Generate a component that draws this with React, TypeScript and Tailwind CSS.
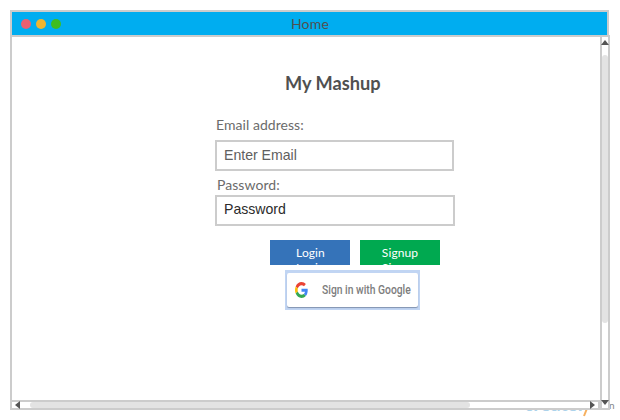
import React from 'react';

function TitleBar() {
  return (
    <header className="grid h-[27px] w-[599px] grid-cols-3 items-center border-2 border-[#cccccc] bg-[#00adf0]">
      <div className="flex gap-[5px] pl-[9px]">
        <span className="size-[10px] rounded-full bg-[#ea6070]" />
        <span className="size-[10px] rounded-full bg-[#efb52f]" />
        <span className="size-[10px] rounded-full bg-[#3fbd20]" />
      </div>
      <h1 className="pl-px pt-px text-center text-[14px] leading-5 tracking-[0.2px] text-[#505050]">Home</h1>
    </header>
  );
}

function GoogleIcon() {
  return (
    <svg className="h-4 w-[13px] shrink-0" viewBox="0 0 48 48" preserveAspectRatio="none">
      <path fill="#EA4335" d="M24 9.5c3.54 0 6.71 1.22 9.21 3.6l6.85-6.85C35.9 2.38 30.47 0 24 0 14.62 0 6.51 5.38 2.56 13.22l7.98 6.19C12.43 13.72 17.74 9.5 24 9.5z" />
      <path fill="#4285F4" d="M46.98 24.55c0-1.57-.15-3.09-.38-4.55H24v9.02h12.94c-.58 2.96-2.26 5.48-4.78 7.18l7.73 6c4.51-4.18 7.09-10.36 7.09-17.65z" />
      <path fill="#FBBC05" d="M10.53 28.59A14.5 14.5 0 0 1 9.77 24c0-1.6.27-3.14.76-4.59l-7.98-6.19A23.9 23.9 0 0 0 0 24c0 3.88.92 7.54 2.56 10.78z" />
      <path fill="#34A853" d="M24 48c6.48 0 11.93-2.13 15.89-5.81l-7.73-6c-2.15 1.45-4.92 2.3-8.16 2.3-6.26 0-11.57-4.22-13.47-9.91l-7.98 6.19C6.51 42.62 14.62 48 24 48z" />
    </svg>
  );
}

function ActionButton({ label, color }: { label: string; color: string }) {
  return (
    <button className={`flex h-[25px] w-20 flex-col items-center overflow-hidden pt-[5px] text-[12px] leading-[15px] tracking-[0.1px] text-white ${color}`}>
      <span className="block h-[15px] shrink-0">{label}</span>
      <span className="block h-[15px] shrink-0">{label}</span>
    </button>
  );
}

function LoginForm() {
  return (
    <main className="flex w-[588px] flex-col pl-[203px] text-[14px] text-[#6b6b6b]">
      <h2 className="mt-[34px] pl-[70px] text-[18.2px] font-bold leading-6 text-[#505050]">My Mashup</h2>
      <label className="mt-[21px] pl-px leading-[18px] tracking-[0.05px]">Email address:</label>
      <input
        className="mt-[6px] h-[31px] w-[239px] border-2 border-[#cccccc] px-[7px] pb-[2px] font-['Liberation_Sans',sans-serif] text-[14.1px] text-[#555555] placeholder:text-[#606060]"
        placeholder="Enter Email"
      />
      <label className="mt-[5px] pl-[2px] leading-[18px] tracking-[0.05px]">Password:</label>
      <input
        className="mt-px h-[31px] w-[240px] border-2 border-[#cccccc] px-[7px] pb-[3px] font-['Liberation_Sans',sans-serif] text-[14.1px] placeholder:text-[#2b2b2b]"
        placeholder="Password"
      />
      <div className="mt-[14px] flex gap-[10px] pl-[55px]">
        <ActionButton label="Login" color="bg-[#3573b9] pl-px" />
        <ActionButton label="Signup" color="bg-[#00a950]" />
      </div>
      <div className="ml-[70px] mt-[5px] h-10 w-[135px] bg-[#c1d5f3] px-[2px] pt-[3px] pb-[3px]">
        <button className="flex h-[34px] w-full items-center rounded-[2px] bg-white pl-2 shadow-[0_1px_1px_#8193b0]">
          <GoogleIcon />
          <span className="ml-[14px] inline-block origin-left scale-x-[.86] whitespace-nowrap font-[Roboto,sans-serif] text-[12px] font-medium text-[#7d7d7d]">
            Sign in with Google
          </span>
        </button>
      </div>
    </main>
  );
}

function VerticalScrollbar() {
  return (
    <div className="flex h-[375px] w-[10px] flex-col items-center border-2 border-[#cccccc]">
      <svg className="mt-[3px] h-[5px] w-2 shrink-0 overflow-visible" viewBox="0 0 8 5"><path fill="#555" d="M4 0 8 5H0z" /></svg>
      <div className="mt-[10px] h-[268px] w-[6px] shrink-0 rounded-full bg-[#e3e3e3]" />
      <svg className="mt-auto h-[5px] w-2 shrink-0 -translate-y-[3px] overflow-visible" viewBox="0 0 8 5"><path fill="#555" d="M0 0h8L4 5z" /></svg>
    </div>
  );
}

function HorizontalScrollbar() {
  return (
    <div className="flex h-[10px] w-[588px] items-center border-y-2 border-r-2 border-[#cccccc] bg-white">
      <svg className="ml-[3px] h-2 w-[5px] shrink-0 overflow-visible" viewBox="0 0 5 8"><path fill="#555" d="M5 0v8L0 4z" /></svg>
      <div className="ml-[10px] h-[6px] w-[440px] rounded-full bg-[#e3e3e3]" />
      <svg className="ml-auto mr-[3px] h-2 w-[5px] shrink-0 overflow-visible" viewBox="0 0 5 8"><path fill="#555" d="m0 0 5 4-5 4z" /></svg>
    </div>
  );
}

function Watermark() {
  return (
    <div className="absolute left-[523px] top-[391px] h-[29px] w-[97px] overflow-hidden">
      <span className="absolute left-px top-0 text-[20px] font-bold leading-6 tracking-[-0.3px] text-[#acd3eb]">createl</span>
      <svg className="absolute left-[60px] top-[15px] h-[11px] w-[9px]" viewBox="0 0 9 11">
        <path d="M5 0 1 10" stroke="#f6b05e" strokeWidth="2" />
      </svg>
      <span className="absolute left-[86px] top-2 text-[10px] leading-3 text-[#888888]">n</span>
    </div>
  );
}

export default function App() {
  return (
    <div className="relative h-[420px] w-[620px] overflow-hidden bg-white pl-[10px] pt-[10px] font-[Lato,sans-serif]">
      <Watermark />
      <div className="relative w-[600px]">
        <TitleBar />
        <div className="-mt-[2px] flex">
          <div className="flex w-[590px] flex-col border-l-2 border-[#cccccc]">
            <div className="h-[365px] border-t-2 border-[#cccccc] bg-white">
              <LoginForm />
            </div>
            <HorizontalScrollbar />
          </div>
          <div className="bg-white">
            <VerticalScrollbar />
          </div>
        </div>
      </div>
    </div>
  );
}
